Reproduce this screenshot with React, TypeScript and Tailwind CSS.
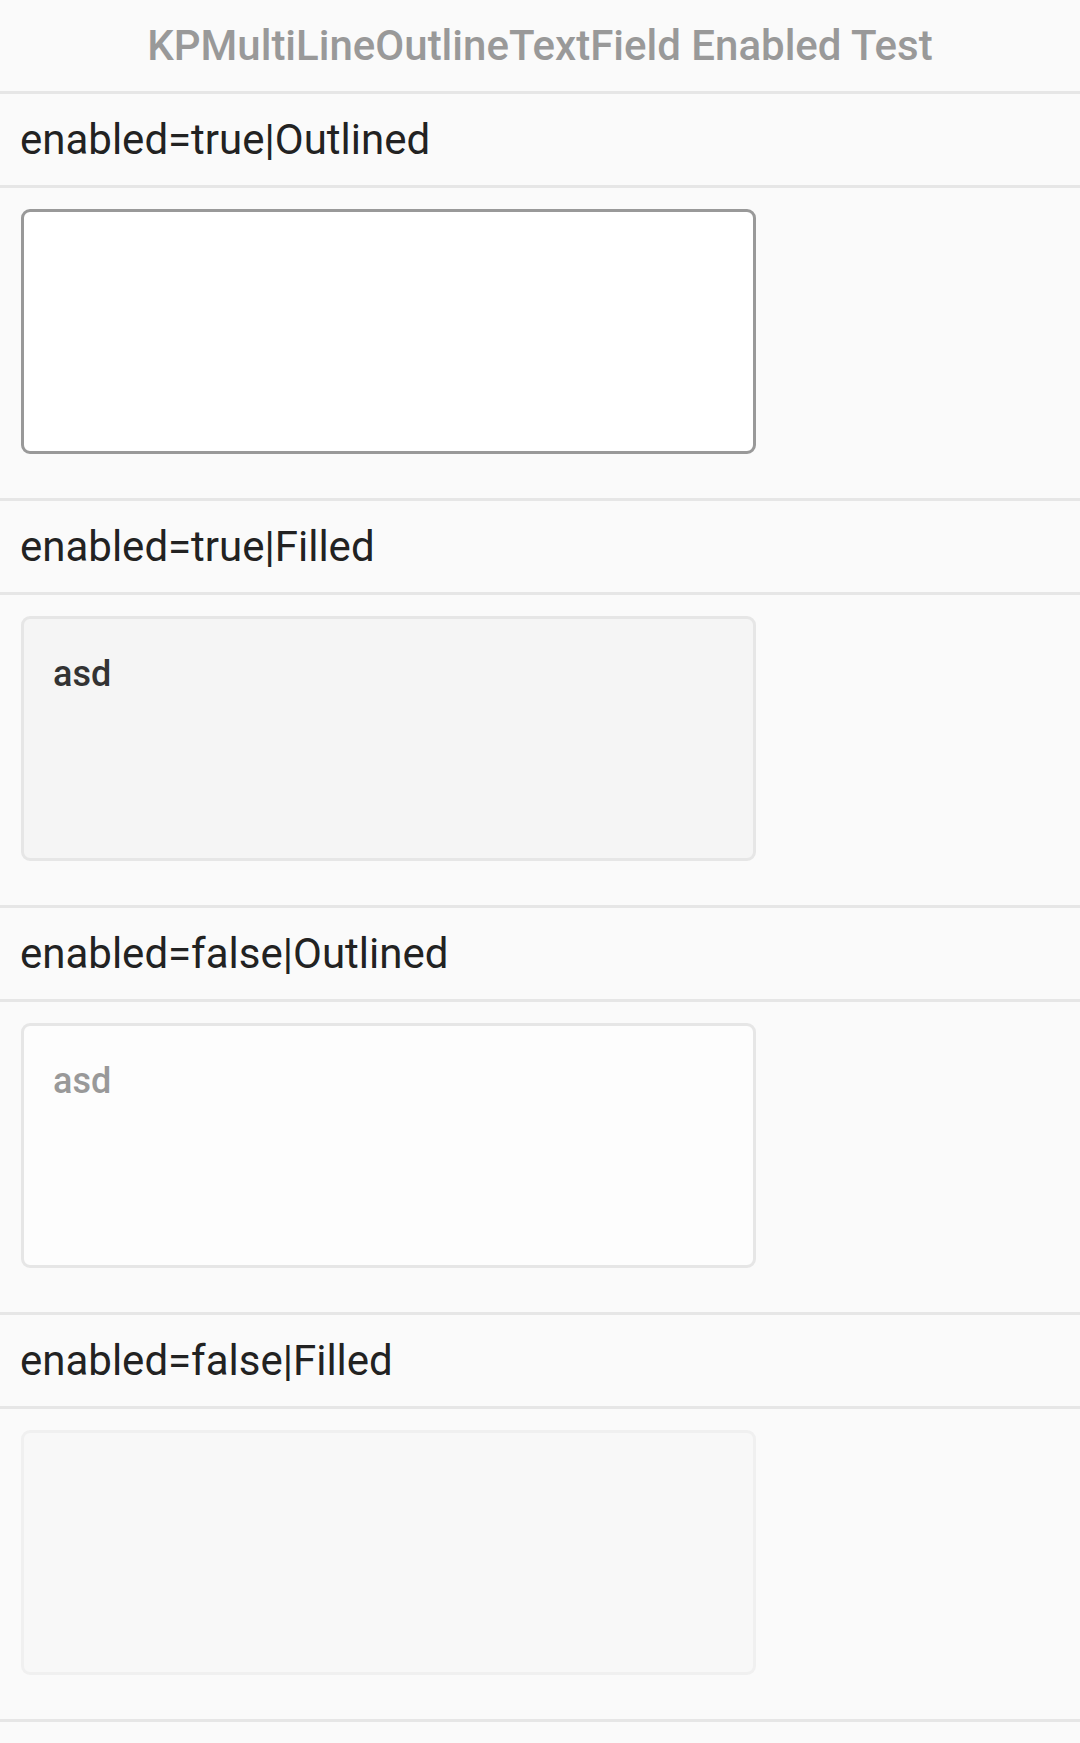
import React from "react";

type Variant = {
  label: string;
  boxClass: string;
  value?: string;
  valueClass?: string;
};

const variants: Variant[] = [
  {
    label: "enabled=true|Outlined",
    boxClass: "bg-white border-[#999999]",
  },
  {
    label: "enabled=true|Filled",
    boxClass: "bg-[#f5f5f5] border-[#e6e6e6]",
    value: "asd",
    valueClass: "text-[#333333]",
  },
  {
    label: "enabled=false|Outlined",
    boxClass: "bg-[#fdfdfd] border-[#e6e6e6]",
    value: "asd",
    valueClass: "text-[#999999]",
  },
  {
    label: "enabled=false|Filled",
    boxClass: "bg-[#f8f8f8] border-[#f0f0f0]",
  },
];

function Divider() {
  return <div className="h-[3px] bg-[#e6e6e6]" />;
}

function Section({ v }: { v: Variant }) {
  return (
    <section>
      <div className="flex h-[91px] items-center px-5 text-[42px] text-[#222222]">{v.label}</div>
      <Divider />
      <div className="px-[21px] pt-[21px] pb-[44px]">
        <div className={`h-[245px] w-[735px] rounded-[9px] border-[3px] px-[29px] pt-[34px] ${v.boxClass}`}>
          {v.value && (
            <div className={`text-[36px] font-medium leading-[42px] ${v.valueClass}`}>{v.value}</div>
          )}
        </div>
      </div>
      <Divider />
    </section>
  );
}

export default function App() {
  return (
    <div
      className="min-h-[1743px] bg-[#fafafa]"
      style={{ fontFamily: "Roboto, 'Noto Sans', sans-serif" }}
    >
      <header className="flex h-[91px] items-center justify-center text-[42px] font-medium text-[#999999]">
        KPMultiLineOutlineTextField Enabled Test
      </header>
      <Divider />
      {variants.map((v) => (
        <Section key={v.label} v={v} />
      ))}
    </div>
  );
}
